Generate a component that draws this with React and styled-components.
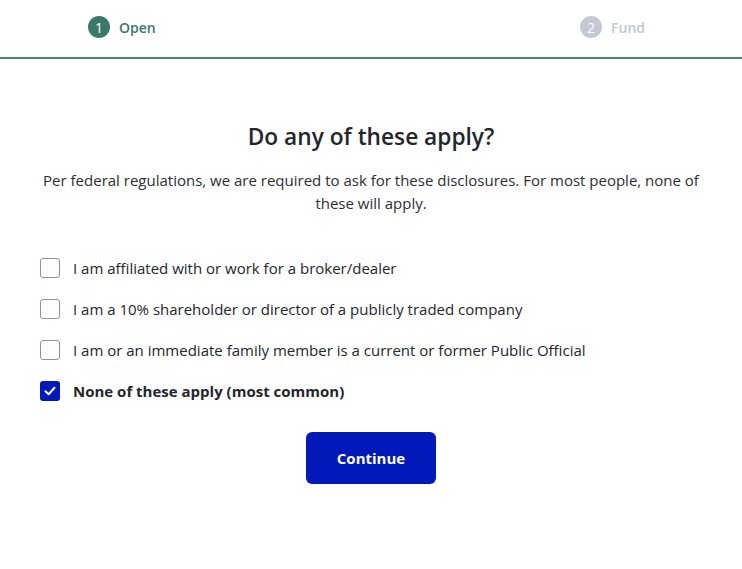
import React, { useState } from "react";
import styled, { createGlobalStyle } from "styled-components";

const GlobalStyle = createGlobalStyle`
  body {
    margin: 0;
    background: #fff;
    font-family: "Open Sans", "Noto Sans", sans-serif;
    color: #1f2328;
  }
`;

const Header = styled.header`
  height: 59px;
  box-sizing: border-box;
  padding: 0 97px 3px 88px;
  border-bottom: 2px solid #3f8a75;
  display: flex;
  align-items: center;
  justify-content: space-between;
`;

const Step = styled.div`
  display: flex;
  align-items: center;
  gap: 9px;
  font-size: 14px;
  font-weight: 600;
  color: ${(p) => (p.active ? "#3a7868" : "#c3c8d3")};
`;

const StepNum = styled.span`
  width: 22px;
  height: 22px;
  border-radius: 50%;
  background: ${(p) => (p.active ? "#3a7868" : "#c3c8d3")};
  color: #fff;
  font-weight: 400;
  font-size: 14px;
  display: flex;
  align-items: center;
  justify-content: center;
`;

const Main = styled.main`
  padding: 62px 40px 0;
  display: flex;
  flex-direction: column;
  align-items: center;
`;

const Title = styled.h1`
  margin: 0;
  font-size: 22.7px;
  font-weight: 600;
  color: #23262b;
  line-height: 32px;
`;

const Lead = styled.p`
  margin: 16px 0 0;
  font-size: 15px;
  line-height: 23px;
  text-align: center;
  color: #2b2e33;
`;

const Options = styled.div`
  align-self: stretch;
  margin-top: 43px;
  display: flex;
  flex-direction: column;
  gap: 21px;
`;

const Option = styled.label`
  display: flex;
  align-items: center;
  gap: 13px;
  font-size: 15px;
  line-height: 20px;
  font-weight: ${(p) => (p.checked ? 700 : 400)};
  color: #23262b;
  cursor: pointer;
`;

const Box = styled.span`
  width: 20px;
  height: 20px;
  box-sizing: border-box;
  border-radius: 3px;
  border: ${(p) => (p.checked ? "none" : "1.5px solid #8891a6")};
  background: ${(p) => (p.checked ? "#0019b8" : "#fff")};
  display: flex;
  align-items: center;
  justify-content: center;
  flex-shrink: 0;
`;

const Button = styled.button`
  margin-top: 31px;
  width: 130px;
  height: 52px;
  border: none;
  border-radius: 6px;
  background: #0019b8;
  color: #fff;
  font-family: inherit;
  font-size: 15px;
  font-weight: 700;
  cursor: pointer;
`;

const options = [
  "I am affiliated with or work for a broker/dealer",
  "I am a 10% shareholder or director of a publicly traded company",
  "I am or an immediate family member is a current or former Public Official",
  "None of these apply (most common)",
];

export default function App() {
  const [selected, setSelected] = useState(3);
  return (
    <>
      <GlobalStyle />
      <Header>
        <Step active>
          <StepNum active>1</StepNum>
          Open
        </Step>
        <Step>
          <StepNum>2</StepNum>
          Fund
        </Step>
      </Header>
      <Main>
        <Title>Do any of these apply?</Title>
        <Lead>
          Per federal regulations, we are required to ask for these disclosures. For most
          people, none of these will apply.
        </Lead>
        <Options>
          {options.map((text, i) => (
            <Option key={i} checked={selected === i} onClick={() => setSelected(i)}>
              <Box checked={selected === i}>
                {selected === i && (
                  <svg width="14" height="14" viewBox="0 0 14 14">
                    <path d="M2.5 7.3 L5.6 10.2 L11.5 3.8" fill="none" stroke="#fff" strokeWidth="2" strokeLinecap="round" strokeLinejoin="round" />
                  </svg>
                )}
              </Box>
              {text}
            </Option>
          ))}
        </Options>
        <Button>Continue</Button>
      </Main>
    </>
  );
}
